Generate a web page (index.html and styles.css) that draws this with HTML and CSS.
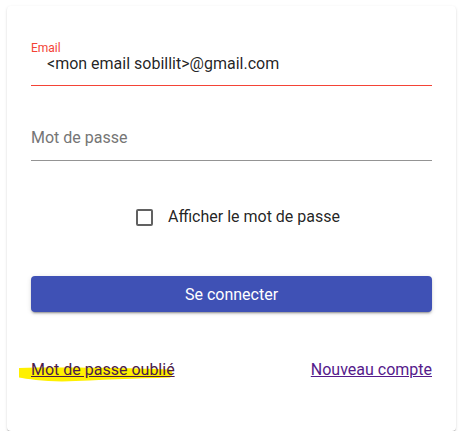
FILE: index.html
```html
<!DOCTYPE html>
<html lang="fr">
<head>
<meta charset="utf-8">
<title>Connexion</title>
<link rel="stylesheet" href="styles.css">
</head>
<body>
<div class="card">
  <div class="field field-email">
    <div class="label">Email</div>
    <div class="value">&lt;mon email sobillit&gt;@gmail.com</div>
  </div>
  <div class="field field-pass">
    <div class="value placeholder">Mot de passe</div>
  </div>
  <div class="check-row">
    <span class="box"></span>
    <span class="check-label">Afficher le mot de passe</span>
  </div>
  <button class="btn">Se connecter</button>
  <div class="links">
    <span class="link-wrap">
      <svg class="highlight" width="160" height="18" viewBox="0 0 160 18"><path d="M1,2 C40,1 110,2 152,3.5 C155,5 155,10 152,11.5 C120,12.5 80,14 44,15.5 C25,15 8,13 1,11.5 Z" fill="#fff000"/></svg>
      <a class="link" href="#">Mot de passe oublié</a>
    </span>
    <a class="link" href="#">Nouveau compte</a>
  </div>
</div>
</body>
</html>
```
FILE: styles.css
```css
html, body {
  margin: 0;
  background: #ffffff;
}
body {
  padding: 6px 7px 0 7px;
  font-family: Roboto, "Liberation Sans", sans-serif;
}
.card {
  width: 449px;
  box-sizing: border-box;
  padding: 36px 24px 51px 24px;
  background: #fff;
  border-radius: 4px;
  box-shadow: 0 2px 1px -1px rgba(0,0,0,0.2), 0 1px 1px 0 rgba(0,0,0,0.14), 0 1px 3px 0 rgba(0,0,0,0.12);
  display: flex;
  flex-direction: column;
}
.field {
  display: flex;
  flex-direction: column;
}
.label {
  font-size: 12px;
  line-height: 12px;
  color: #f44336;
}
.value {
  font-size: 16px;
  line-height: 20px;
  color: rgba(0,0,0,0.87);
}
.field-email {
  padding-bottom: 11px;
  border-bottom: 1px solid #f44336;
}
.field-email .value {
  padding-left: 16px;
}
.field-pass {
  margin-top: 42px;
  padding-bottom: 12px;
  border-bottom: 1px solid #949494;
}
.placeholder {
  color: #757575;
}
.check-row {
  margin-top: 46px;
  display: flex;
  justify-content: center;
  align-items: center;
  gap: 15px;
  padding-left: 13px;
  height: 20px;
}
.box {
  width: 17px;
  height: 17px;
  box-sizing: border-box;
  border: 2px solid #616161;
  border-radius: 2px;
}
.check-label {
  font-size: 16px;
  line-height: 20px;
  color: rgba(0,0,0,0.87);
}
.btn {
  margin-top: 49px;
  height: 36px;
  border: none;
  border-radius: 4px;
  background: #3f51b5;
  color: #fff;
  font-family: Roboto, "Liberation Sans", sans-serif;
  font-size: 16px;
  padding: 0;
  box-shadow: 0 3px 1px -2px rgba(0,0,0,0.2), 0 2px 2px 0 rgba(0,0,0,0.14), 0 1px 5px 0 rgba(0,0,0,0.12);
}
.links {
  margin-top: 48px;
  display: flex;
  justify-content: space-between;
  font-size: 16px;
  line-height: 20px;
}
.link-wrap {
  position: relative;
}
.highlight {
  position: absolute;
  left: -13px;
  top: 6px;
  z-index: 0;
}
.link {
  position: relative;
  z-index: 1;
  color: #551a8b;
  text-decoration: underline;
}
.link-wrap .link {
  color: #4a1a4a;
}
```
